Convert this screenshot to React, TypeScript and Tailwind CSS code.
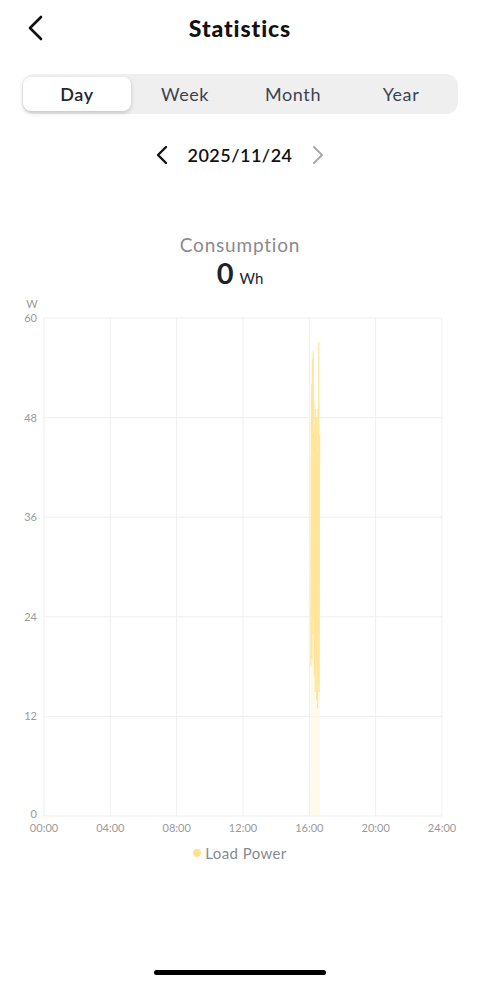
import React from "react";

const FONT = { fontFamily: "Lato, 'Noto Sans', sans-serif" };

// plot geometry (svg coords, svg starts at page y = 298)
const LEFT = 44;
const RIGHT = 442;
const TOP = 20;
const BOTTOM = 518;
const MAX = 60;

const yOf = (v: number) => BOTTOM - (v / MAX) * (BOTTOM - TOP);
const xOf = (h: number) => LEFT + (h / 24) * (RIGHT - LEFT);

// load power samples around 16:00 - 16:40 (x in px, value in W)
const samples: [number, number][] = [
    [310.8, 18], [311.2, 46], [311.6, 52], [312, 19], [312.4, 55],
    [312.8, 22], [313.2, 56], [313.6, 24], [314, 50], [314.4, 17], [314.8, 47],
    [315.2, 15], [315.6, 49], [316, 18], [316.4, 48], [316.8, 14], [317.2, 44],
    [317.6, 13], [318, 49], [318.4, 16], [318.8, 57], [319.2, 15], [319.6, 46],
];

function Chart() {
    const line = samples.map(([x, v]) => `${x},${yOf(v).toFixed(1)}`).join(" ");
    const area = `M310.2,${BOTTOM} L${line.replace(/ /g, " L")} L320,${BOTTOM} Z`;
    const yTicks = [0, 12, 24, 36, 48, 60];
    const xTicks = [0, 4, 8, 12, 16, 20, 24];

    return (
        <svg width={480} height={540} className="block">
            {/* grid */}
            {yTicks.map((t) => (
                <line key={t} x1={LEFT} x2={RIGHT} y1={yOf(t)} y2={yOf(t)} stroke="#efefef" strokeWidth={1} />
            ))}
            {xTicks.map((t) => (
                <line key={t} x1={xOf(t)} x2={xOf(t)} y1={TOP} y2={BOTTOM} stroke="#efefef" strokeWidth={1} />
            ))}

            {/* series */}
            <path d={area} fill="#fff6dc" fillOpacity={0.6} />
            <polyline points={line} fill="none" stroke="#ffe69a" strokeWidth={1.2} strokeLinejoin="round" />

            {/* axis labels */}
            <text x={32} y={10} textAnchor="middle" fontSize={11} fill="#9a9a9a" style={FONT}>W</text>
            {yTicks.map((t) => (
                <text key={t} x={37} y={yOf(t) + (t === 0 ? 2 : 4)} textAnchor="end" fontSize={11} fill="#9a9a9a" style={FONT}>
                    {t}
                </text>
            ))}
            {xTicks.map((t) => (
                <text key={t} x={xOf(t)} y={534} textAnchor="middle" fontSize={11} fill="#9a9a9a" style={FONT}>
                    {String(t).padStart(2, "0")}:00
                </text>
            ))}
        </svg>
    );
}

export default function App() {
    const tabs = ["Day", "Week", "Month", "Year"];

    return (
        <div className="w-[480px] min-h-[986px] bg-white relative" style={FONT}>
            {/* header */}
            <div className="h-14 relative flex items-center justify-center">
                <button className="absolute left-[26px] top-[15px] p-0">
                    <svg width="20" height="26" viewBox="0 0 20 26" fill="none">
                        <path d="M15 2 L4 13 L15 24" stroke="#111" strokeWidth={2.6} strokeLinecap="round" strokeLinejoin="round" />
                    </svg>
                </button>
                <h1 className="text-[23px] font-black text-[#111] tracking-[0.9px]">Statistics</h1>
            </div>

            {/* period tabs */}
            <div className="mx-[22px] mt-[18px] h-10 rounded-xl bg-[#efefef] p-[3px] pl-[1px] grid grid-cols-4">
                {tabs.map((t, i) => (
                    <div
                        key={t}
                        className={
                            i === 0
                                ? "rounded-lg bg-white shadow-[0_2px_4px_rgba(0,0,0,0.18)] flex items-center justify-center text-[18px] font-semibold text-[#1f2733] tracking-[0.6px]"
                                : "flex items-center justify-center text-[18px] text-[#3b4350] tracking-[0.6px]"
                        }
                    >
                        {t}
                    </div>
                ))}
            </div>

            {/* date switcher */}
            <div className="mt-[29px] h-6 flex items-center justify-center gap-[18px]">
                <svg width="14" height="20" viewBox="0 0 14 20" fill="none">
                    <path d="M11 2 L3 10 L11 18" stroke="#111" strokeWidth={2.4} strokeLinecap="round" strokeLinejoin="round" />
                </svg>
                <span className="text-[18px] font-semibold text-[#111] tracking-[0.5px]">2025/11/24</span>
                <svg width="14" height="20" viewBox="0 0 14 20" fill="none">
                    <path d="M3 2 L11 10 L3 18" stroke="#a8a8a8" strokeWidth={2} strokeLinecap="round" strokeLinejoin="round" />
                </svg>
            </div>

            {/* consumption */}
            <div className="mt-[66px] flex flex-col items-center">
                <span className="text-[19px] leading-6 text-[#8a8a8e] tracking-[0.8px]">Consumption</span>
                <div className="flex items-baseline gap-[6px] leading-8">
                    <span className="text-[29px] font-bold text-[#1b2330]">0</span>
                    <span className="text-[15px] text-[#1b2330]">Wh</span>
                </div>
            </div>

            {/* chart */}
            <div className="mt-[4px]">
                <Chart />
            </div>

            {/* legend */}
            <div className="mt-[5px] h-5 flex items-center justify-center gap-[4px]">
                <span className="w-2 h-2 rounded-full bg-[#ffe48f]" />
                <span className="text-[15px] text-[#8a8a8e] tracking-[0.4px]">Load Power</span>
            </div>

            {/* home indicator */}
            <div className="absolute left-[154px] top-[970px] w-[172px] h-[5px] rounded-full bg-black" />
        </div>
    );
}
